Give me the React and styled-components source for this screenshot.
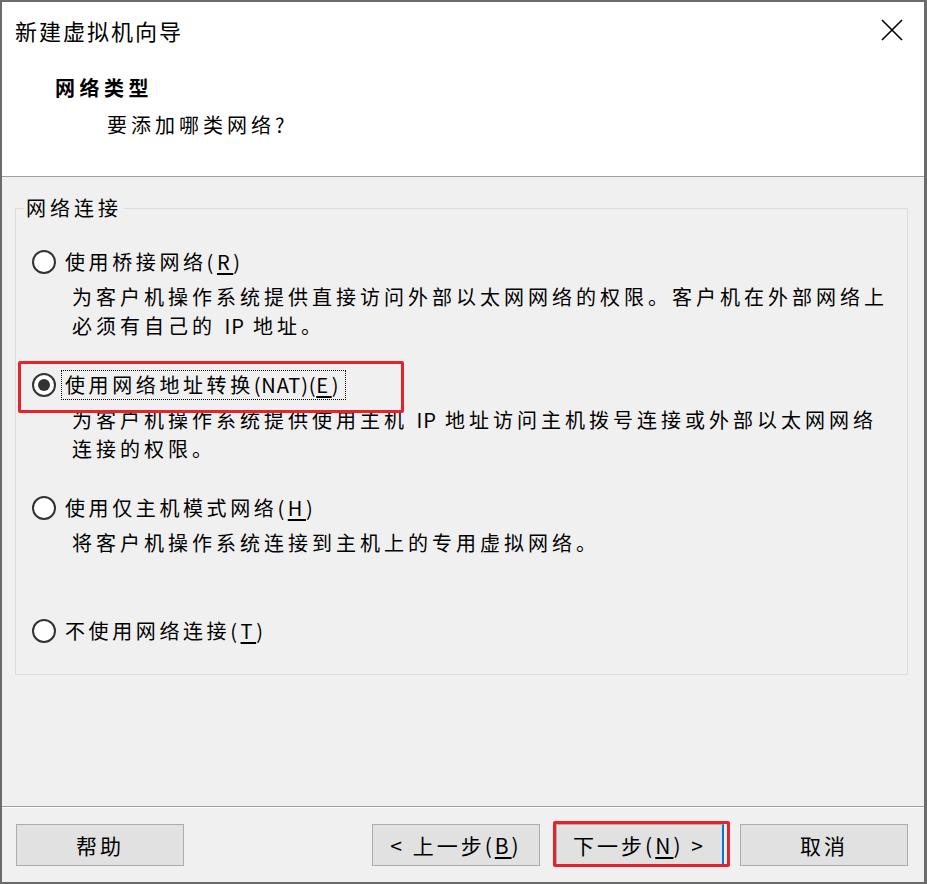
import React from "react";
import styled, { createGlobalStyle, css } from "styled-components";

const GlobalStyle = createGlobalStyle`
  html, body { margin: 0; padding: 0; background: #ffffff; }
  * { box-sizing: border-box; }
  body {
    font-family: "Noto Sans CJK SC", "Microsoft YaHei", "Noto Sans", sans-serif;
    color: #000;
  }
`;

const Window = styled.div`
  width: 927px;
  height: 884px;
  border-style: solid;
  border-color: #6b6b6b;
  border-width: 2px 3px 2px 2px;
  display: flex;
  flex-direction: column;
  background: #f0f0f0;
`;

const Header = styled.header`
  height: 175px;
  flex: none;
  background: #ffffff;
  border-bottom: 1px solid #a0a0a0;
`;

const TitleBar = styled.div`
  height: 56px;
  display: flex;
  align-items: center;
  justify-content: space-between;
  padding: 0 21px 0 13px;
`;

const Title = styled.h1`
  margin: 0;
  font-size: 22px;
  font-weight: 400;
  letter-spacing: 2px;
  line-height: 30px;
`;

const CloseButton = styled.button`
  border: 0;
  background: transparent;
  padding: 0;
  width: 22px;
  height: 22px;
  display: flex;
  align-items: center;
  justify-content: center;
  cursor: pointer;
`;

const Heading = styled.h2`
  margin: 15px 0 0 53px;
  font-size: 20px;
  font-weight: 700;
  letter-spacing: 4.5px;
  line-height: 30px;
`;

const SubHeading = styled.p`
  margin: 7px 0 0 105px;
  font-size: 20px;
  letter-spacing: 4px;
  line-height: 30px;
`;

const Body = styled.main`
  flex: 1;
  padding: 0 16px 0 13px;
`;

const Group = styled.fieldset`
  margin: 16px 0 0;
  padding: 22px 0 26px 0;
  border: 1px solid #dcdcdc;
  min-width: 0;
`;

const Legend = styled.legend`
  margin-left: 8px;
  padding: 0 2px;
  font-size: 20px;
  letter-spacing: 4px;
  line-height: 30px;
`;

const Option = styled.div`
  margin: 0 0 ${(p) => (p.$last ? "0" : "28px")} 16px;
`;

const RadioRow = styled.label`
  position: relative;
  display: flex;
  align-items: center;
  height: 34px;
  ${(p) =>
    p.$marked &&
    css`
      &::after {
        content: "";
        position: absolute;
        left: -14px;
        top: -7px;
        width: 380px;
        height: 46px;
        border: 3px solid #e8212b;
        border-radius: 2px;
        pointer-events: none;
      }
    `}
`;

const Circle = styled.span`
  width: 24px;
  height: 24px;
  flex: none;
  border-radius: 50%;
  border: 2px solid #333333;
  background: #ffffff;
  display: flex;
  align-items: center;
  justify-content: center;
  &::before {
    content: "";
    width: 12px;
    height: 12px;
    border-radius: 50%;
    background: #333333;
    display: ${(p) => (p.$checked ? "block" : "none")};
  }
`;

const RadioText = styled.span`
  margin-left: 6px;
  padding: 0 3px;
  font-size: 20px;
  letter-spacing: 3.6px;
  line-height: 28px;
  white-space: nowrap;
  outline: ${(p) => (p.$focused ? "1px dotted #000" : "none")};
  outline-offset: 0;
  u { text-underline-offset: 3px; }
`;

const Latin = styled.span`
  letter-spacing: 0.8px;
`;

const Desc = styled.p`
  margin: 3px 0 0 40px;
  min-height: 58px;
  font-size: 20px;
  letter-spacing: 4px;
  line-height: 29px;
  white-space: pre-line;
`;

const Footer = styled.footer`
  height: 76px;
  flex: none;
  border-top: 1px solid #a0a0a0;
  box-shadow: inset 0 1px 0 #ffffff;
  display: flex;
  align-items: flex-start;
  padding: 17px 16px 0 14px;
  gap: 16px;
`;

const Spacer = styled.div`
  flex: 1;
`;

const Button = styled.button`
  position: relative;
  width: 168px;
  height: 42px;
  background: #e1e1e1;
  border: 1px solid #adadad;
  border-right: ${(p) => (p.$default ? "2px solid #0078d7" : "1px solid #adadad")};
  font-family: inherit;
  font-size: 21px;
  letter-spacing: 3px;
  color: #000;
  padding: 0;
  cursor: pointer;
  u { text-underline-offset: 3px; }
  ${(p) =>
    p.$marked &&
    css`
      &::after {
        content: "";
        position: absolute;
        left: -4px;
        top: -4px;
        right: -8px;
        bottom: -2px;
        border: 3px solid #e8212b;
        border-radius: 2px;
        pointer-events: none;
      }
    `}
`;

const options = [
  {
    label: (
      <>
        使用桥接网络(<u>R</u>)
      </>
    ),
    desc: (
      <>
        为客户机操作系统提供直接访问外部以太网网络的权限。客户机在外部网络上
        {"\n"}必须有自己的 <Latin>IP</Latin> 地址。
      </>
    ),
  },
  {
    label: (
      <>
        使用网络地址转换<Latin>(NAT)(</Latin>
        <u>E</u>)
      </>
    ),
    desc: (
      <>
        为客户机操作系统提供使用主机 <Latin>IP</Latin> 地址访问主机拨号连接或外部以太网网络
        {"\n"}连接的权限。
      </>
    ),
    checked: true,
  },
  {
    label: (
      <>
        使用仅主机模式网络(<u>H</u>)
      </>
    ),
    desc: "将客户机操作系统连接到主机上的专用虚拟网络。",
  },
  {
    label: (
      <>
        不使用网络连接(<u>T</u>)
      </>
    ),
    last: true,
  },
];

export default function App() {
  return (
    <>
      <GlobalStyle />
      <Window>
        <Header>
          <TitleBar>
            <Title>新建虚拟机向导</Title>
            <CloseButton aria-label="关闭">
              <svg width="22" height="22" viewBox="0 0 22 22">
                <path d="M1 1 L21 21 M21 1 L1 21" stroke="#000" strokeWidth="1.6" fill="none" />
              </svg>
            </CloseButton>
          </TitleBar>
          <Heading>网络类型</Heading>
          <SubHeading>要添加哪类网络?</SubHeading>
        </Header>
        <Body>
          <Group>
            <Legend>网络连接</Legend>
            {options.map((o, i) => (
              <Option key={i} $last={o.last}>
                <RadioRow $marked={o.checked}>
                  <Circle $checked={o.checked} />
                  <RadioText $focused={o.checked}>{o.label}</RadioText>
                </RadioRow>
                {o.desc !== undefined && <Desc>{o.desc}</Desc>}
              </Option>
            ))}
          </Group>
        </Body>
        <Footer>
          <Button>帮助</Button>
          <Spacer />
          <Button>
            &lt; 上一步(<u>B</u>)
          </Button>
          <Button $default $marked>
            下一步(<u>N</u>) &gt;
          </Button>
          <Button>取消</Button>
        </Footer>
      </Window>
    </>
  );
}
